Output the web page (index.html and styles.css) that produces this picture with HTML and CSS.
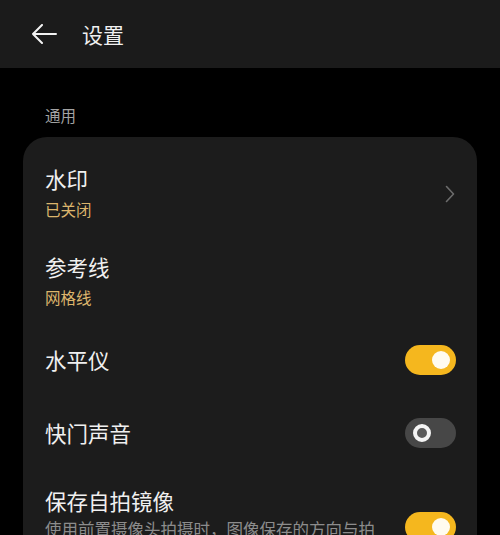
FILE: index.html
```html
<!DOCTYPE html>
<html lang="zh-CN">
<head>
    <meta charset="UTF-8">
    <meta name="viewport" content="width=device-width, initial-scale=1.0">
    <title>设置</title>
    <link rel="stylesheet" href="styles.css">
</head>
<body>
    <header class="top-bar">
        <svg class="back" width="26" height="20" viewBox="0 0 26 20">
            <path d="M25 10H2M11 1L2 10l9 9" fill="none" stroke="#f2f2f2" stroke-width="2" stroke-linecap="round" stroke-linejoin="round"/>
        </svg>
        <h1>设置</h1>
    </header>
    <main>
        <p class="group-label">通用</p>
        <section class="card">
            <div class="row tall">
                <div class="text">
                    <div class="title">水印</div>
                    <div class="sub">已关闭</div>
                </div>
                <svg class="chevron" width="10" height="18" viewBox="0 0 10 18">
                    <path d="M1.5 1.5L8.5 9l-7 7.5" fill="none" stroke="#6c6c6c" stroke-width="1.6" stroke-linecap="round" stroke-linejoin="round"/>
                </svg>
            </div>
            <div class="row tall tight">
                <div class="text">
                    <div class="title">参考线</div>
                    <div class="sub">网格线</div>
                </div>
            </div>
            <div class="row single">
                <div class="text">
                    <div class="title">水平仪</div>
                </div>
                <span class="switch on"><span class="knob"></span></span>
            </div>
            <div class="row single">
                <div class="text">
                    <div class="title">快门声音</div>
                </div>
                <span class="switch off"><span class="knob"></span></span>
            </div>
            <div class="row tall spaced">
                <div class="text">
                    <div class="title">保存自拍镜像</div>
                    <div class="desc">使用前置摄像头拍摄时，图像保存的方向与拍摄预览画面保持一致</div>
                </div>
                <span class="switch on"><span class="knob"></span></span>
            </div>
        </section>
    </main>
</body>
</html>
```

FILE: styles.css
```css
body {
    margin: 0;
    background-color: #000;
    color: #f0f0f0;
    font-family: "Noto Sans CJK SC", "Noto Sans", sans-serif;
    overflow: hidden;
}
.top-bar {
    height: 68px;
    background: #1b1b1b;
    display: flex;
    align-items: center;
    padding: 0 0 0 31px;
}
.top-bar .back {
    margin-right: 25px;
}
.top-bar h1 {
    margin: 0;
    font-size: 21px;
    font-weight: normal;
    line-height: 30px;
}
.group-label {
    margin: 0;
    padding: 35px 0 0 45px;
    height: 34px;
    font-size: 15.5px;
    line-height: 24px;
    color: #a3a3a3;
}
.card {
    margin: 0 23px;
    background: #1c1c1c;
    border-radius: 24px;
    padding: 13px 21px 0 22px;
}
.row {
    display: flex;
    align-items: center;
}
.row.tall {
    padding: 14px 0;
}
.row.tall.tight {
    padding-bottom: 11.5px;
}
.row.tall.spaced {
    padding-top: 16.5px;
}
.row.single {
    min-height: 73px;
}
.text {
    flex: 1;
    margin-right: 20px;
}
.title {
    font-size: 21.5px;
    line-height: 30px;
}
.sub {
    font-size: 15.5px;
    line-height: 30px;
    color: #dcb56c;
}
.desc {
    font-size: 16.5px;
    line-height: 26px;
    color: #8c8c8c;
}
.chevron {
    margin-right: 1px;
}
.switch {
    position: relative;
    width: 51px;
    height: 30px;
    border-radius: 15px;
    flex-shrink: 0;
}
.switch.on {
    background: #f5b71e;
}
.switch.off {
    background: #474747;
}
.knob {
    position: absolute;
    top: 6px;
    width: 18px;
    height: 18px;
    border-radius: 50%;
    box-sizing: border-box;
}
.switch.on .knob {
    right: 6px;
    background: #fffbef;
}
.switch.off .knob {
    left: 8px;
    background: #5a5a5a;
    border: 4px solid #f4f4f4;
}
```
